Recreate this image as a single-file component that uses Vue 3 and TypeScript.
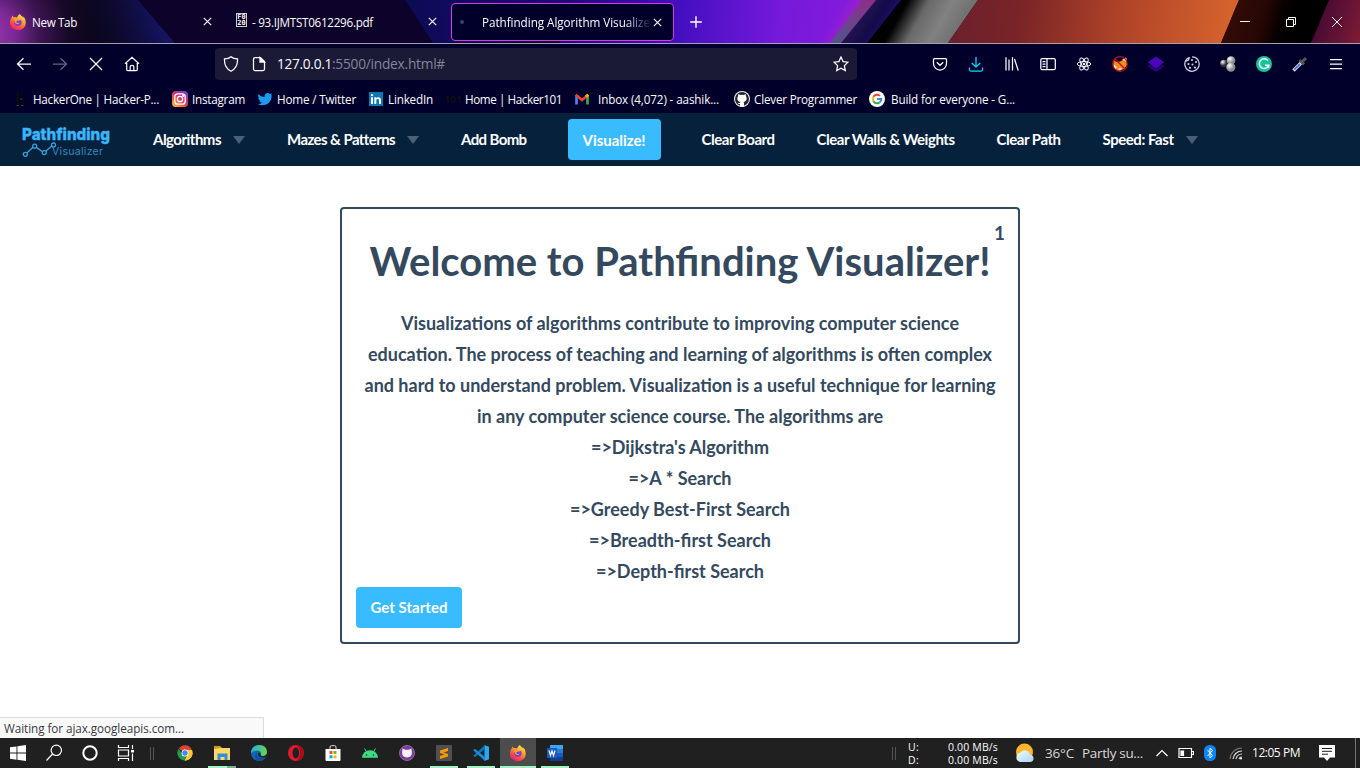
<script setup lang="ts">
import { nextTick, type Directive } from 'vue'

interface Mark { id: string; text: string; width: number }
interface NavItem { text: string; width: number; menu?: boolean; primary?: boolean }

const bookmarks: Mark[] = [
  { id: 'h1', text: 'HackerOne | Hacker-P...', width: 126 },
  { id: 'insta', text: 'Instagram', width: 53 },
  { id: 'twitter', text: 'Home / Twitter', width: 79 },
  { id: 'linkedin', text: 'LinkedIn', width: 45 },
  { id: 'h101', text: 'Home | Hacker101', width: 97 },
  { id: 'gmail', text: 'Inbox (4,072) - aashik...', width: 121 },
  { id: 'github', text: 'Clever Programmer', width: 103 },
  { id: 'google', text: 'Build for everyone - G...', width: 124 },
]

const nav: NavItem[] = [
  { text: 'Algorithms', width: 68, menu: true },
  { text: 'Mazes & Patterns', width: 108, menu: true },
  { text: 'Add Bomb', width: 65.5 },
  { text: 'Visualize!', width: 63, primary: true },
  { text: 'Clear Board', width: 73 },
  { text: 'Clear Walls & Weights', width: 138 },
  { text: 'Clear Path', width: 64 },
  { text: 'Speed: Fast', width: 71, menu: true },
]

const lines = [
  { text: 'Visualizations of algorithms contribute to improving computer science', width: 558 },
  { text: 'education. The process of teaching and learning of algorithms is often complex', width: 624 },
  { text: 'and hard to understand problem. Visualization is a useful technique for learning', width: 631 },
  { text: 'in any computer science course. The algorithms are', width: 406 },
  { text: "=>Dijkstra's Algorithm", width: 178 },
  { text: '=>A * Search', width: 103 },
  { text: '=>Greedy Best-First Search', width: 220 },
  { text: '=>Breadth-first Search', width: 182 },
  { text: '=>Depth-first Search', width: 168 },
]

const spokes = [0, 60, 120]

/* Tracks a label so that it spans the given width. */
const vFit: Directive<HTMLElement, number> = {
  mounted(el, { value }) {
    nextTick(() => {
      const count = (el.textContent ?? '').length
      for (let pass = 0; pass < 2; pass++) {
        const current = parseFloat(el.style.letterSpacing || '0')
        const gap = value - el.getBoundingClientRect().width
        el.style.letterSpacing = `${current + gap / count}px`
      }
    })
  },
}
</script>

<template>
  <div class="screen">
    <header class="tabs">
      <svg class="theme" viewBox="0 0 1360 43" preserveAspectRatio="none">
        <defs>
          <radialGradient id="pu" gradientUnits="userSpaceOnUse" cx="-14" cy="34" r="110">
            <stop offset="0" stop-color="#a336b4" /><stop offset=".25" stop-color="#7c2a96" /><stop offset=".5" stop-color="#3a1450" /><stop offset=".75" stop-color="#180828" /><stop offset="1" stop-color="#0a0416" />
          </radialGradient>
          <linearGradient id="navy" gradientUnits="userSpaceOnUse" x1="70" y1="43" x2="157" y2="14"><stop offset="0" stop-color="#0b0720" stop-opacity="0" /><stop offset="1" stop-color="#141461" /></linearGradient>
          <linearGradient id="vio" gradientUnits="userSpaceOnUse" x1="405" y1="0" x2="860" y2="30"><stop offset="0" stop-color="#0b0b52" /><stop offset=".35" stop-color="#1c0b78" /><stop offset=".6" stop-color="#430fc0" /><stop offset=".82" stop-color="#7519da" /><stop offset="1" stop-color="#861bdd" /></linearGradient>
          <linearGradient id="pink" gradientUnits="userSpaceOnUse" x1="833" y1="20" x2="860" y2="36"><stop offset="0" stop-color="#9b20cc" stop-opacity="0" /><stop offset=".5" stop-color="#9b20cc" /><stop offset="1" stop-color="#9c24b4" /></linearGradient>
          <linearGradient id="mauve" gradientUnits="userSpaceOnUse" x1="868" y1="0" x2="838" y2="43"><stop offset="0" stop-color="#8c2f8c" /><stop offset="1" stop-color="#53538c" /></linearGradient>
          <linearGradient id="ink" gradientUnits="userSpaceOnUse" x1="855" y1="20" x2="884" y2="40"><stop offset="0" stop-color="#251452" /><stop offset=".5" stop-color="#140b4a" /><stop offset="1" stop-color="#2a0c84" /></linearGradient>
          <linearGradient id="grey" gradientUnits="userSpaceOnUse" x1="884" y1="14" x2="962" y2="58"><stop offset="0" stop-color="#000" /><stop offset=".16" stop-color="#020202" /><stop offset=".37" stop-color="#696969" /><stop offset=".6" stop-color="#818181" /><stop offset=".82" stop-color="#707070" /><stop offset="1" stop-color="#949494" /></linearGradient>
          <linearGradient id="fire" gradientUnits="userSpaceOnUse" x1="950" y1="10" x2="1225" y2="43"><stop offset="0" stop-color="#6c202d" /><stop offset=".25" stop-color="#792427" /><stop offset=".6" stop-color="#ae4228" /><stop offset="1" stop-color="#d4622d" /></linearGradient>
          <linearGradient id="coal" gradientUnits="userSpaceOnUse" x1="1221" y1="20" x2="1290" y2="38"><stop offset="0" stop-color="#360c07" /><stop offset=".55" stop-color="#270704" /><stop offset=".8" stop-color="#070101" /><stop offset="1" stop-color="#000" /></linearGradient>
          <linearGradient id="wine" gradientUnits="userSpaceOnUse" x1="1315" y1="20" x2="1360" y2="35"><stop offset="0" stop-color="#430a33" /><stop offset="1" stop-color="#7d1a35" /></linearGradient>
        </defs>
        <rect width="1360" height="43" fill="#0a0416" />
        <rect width="180" height="43" fill="url(#pu)" />
        <path d="M60 0H138L175 43H60Z" fill="url(#navy)" />
        <path d="M138 0H405L433 43H175Z" fill="#0d032a" />
        <path d="M405 0H872L835 43H433Z" fill="url(#vio)" />
        <path d="M440 43L560 41V43Z" fill="#09042b" />
        <path d="M848 0H880L842 43H815Z" fill="url(#pink)" />
        <path d="M862 0H877L842 43H830Z" fill="url(#mauve)" />
        <path d="M876 0H902L868 43H841Z" fill="url(#ink)" />
        <path d="M901 0H978L948 43H867Z" fill="url(#grey)" />
        <path d="M978 0H1239L1221 43H948Z" fill="url(#fire)" />
        <path d="M1239 0H1329L1311 43H1221Z" fill="url(#coal)" />
        <path d="M1329 0H1360V43H1311Z" fill="url(#wine)" />
      </svg>
      <div class="tab first">
        <svg class="i16" viewBox="0 0 16 16"><use href="#firefox" /></svg>
        <span v-fit="45" class="t">New Tab</span>
        <svg class="x" viewBox="0 0 9 9"><path d="M.8.8l7.4 7.4M8.2.8L.8 8.2" /></svg>
      </div>
      <div class="tab second">
        <span class="tofu"><i>F0</i><i>20</i></span>
        <span v-fit="121" class="t">- 93.IJMTST0612296.pdf</span>
        <svg class="x" viewBox="0 0 9 9"><path d="M.8.8l7.4 7.4M8.2.8L.8 8.2" /></svg>
      </div>
      <div class="tab active">
        <i class="dot"></i>
        <span class="clip"><span v-fit="168" class="t">Pathfinding Algorithm Visualize</span></span>
        <svg class="x" viewBox="0 0 9 9"><path d="M.8.8l7.4 7.4M8.2.8L.8 8.2" /></svg>
      </div>
      <svg class="plus" viewBox="0 0 12 12"><path d="M6 .2v11.600M.2 6h11.600" /></svg>
      <div class="win">
        <svg viewBox="0 0 10 10"><path d="M0 4.500h10" /></svg>
        <svg viewBox="0 0 10 10"><path d="M.5 2.500h7v7h-7zM2.500 2.500v-2h7v7h-2" /></svg>
        <svg viewBox="0 0 10 10"><path d="M0 0l10 10M10 0L0 10" /></svg>
      </div>
    </header>

    <div class="toolbar">
      <div class="moves">
        <svg viewBox="0 0 16 16"><path d="M15 8H1.500M7.500 2.200L1.500 8l6 5.800" /></svg>
        <svg class="off" viewBox="0 0 16 16"><path d="M1 8h13.500M8.500 2.200L14.500 8l-6 5.800" /></svg>
        <svg viewBox="0 0 16 16"><path d="M2 2l12 12M14 2L2 14" /></svg>
        <svg viewBox="0 0 16 16"><path d="M1 7.800L8 1.300l7 6.500M2.700 7v6.600q0 1.100 1.100 1.100h8.400q1.100 0 1.100-1.100V7M6.200 14.500v-4q0-1.200 1.800-1.200t1.800 1.200v4" /></svg>
      </div>
      <div class="url">
        <svg viewBox="0 0 16 16"><path d="M8 .8C6.500 2.200 3.700 2.900 1.500 2.900 1.200 8.500 3 12.700 8 15.200 13 12.700 14.800 8.500 14.500 2.900 12.300 2.900 9.500 2.200 8 .8Z" /></svg>
        <svg viewBox="0 0 16 16"><path d="M9.500 1.500H4Q2.500 1.500 2.500 3v10Q2.500 14.500 4 14.500h8q1.500 0 1.500-1.500V5.500Z" /><path d="M9 1.500v4.500h4.500Z" fill="#fbfbfe" /></svg>
        <span class="address"><span v-fit="55">127.0.0.1</span><span v-fit="113" class="dim">:5500/index.html#</span></span>
        <svg class="star" viewBox="0 0 16 16"><path d="M8 1l2.100 4.600 4.900.6-3.600 3.400.9 5L8 12.200 3.700 14.600l.9-5L1 6.200l4.900-.6Z" /></svg>
      </div>
      <div class="tools">
        <svg viewBox="0 0 16 16"><path d="M2.500 2.500h11q1 0 1 1v4a6.500 6.500 0 0 1-13 0v-4q0-1 1-1ZM4.800 6.300L8 9.300l3.200-3" /></svg>
        <svg class="cyan" viewBox="0 0 16 16"><path d="M8 .8v10M3.700 7L8 11l4.300-4M1.500 11.500v2q0 1.500 1.500 1.500h10q1.500 0 1.500-1.500v-2" /></svg>
        <svg viewBox="0 0 16 16"><path d="M2 1.200v13.300M5 3.500v11M8.500 1.200v13.300M10.500 3l3.700 11.500" /></svg>
        <svg viewBox="0 0 16 16"><rect x=".8" y="2.500" width="14.500" height="11.200" rx="1.500" /><path d="M7 2.500v11.200M2.500 5.500h3M2.500 8h3M2.500 10.500h3" /></svg>
        <svg viewBox="0 0 16 16"><ellipse v-for="a in spokes" :key="a" cx="8" cy="8" rx="6.800" ry="2.500" stroke-width="1" :transform="`rotate(${a} 8 8)`" /><circle cx="8" cy="8" r="1.200" fill="#fbfbfe" stroke="none" /></svg>
        <svg viewBox="0 0 16 16"><g stroke="none"><path d="M1.500 4l3 2L8 5.500l3-1.500L14.500 2l.5 7-3 4L6 15l-4.500-4Z" fill="#ef8c20" /><path d="M1 8l4 3-2 2.500ZM10 3.500l4-2 .8 4.500ZM6 12.500l4-.5-2 3Z" fill="#eee0d0" /></g><circle cx="8" cy="8" r="7.300" stroke="#c00d15" stroke-width="1.200" /><path d="M3 3l10 10" stroke="#c00d15" stroke-width="1.200" /></svg>
        <svg viewBox="0 0 16 16"><g stroke="none"><path d="M0 10.500L8 5l8 5.500-8 5.500Z" fill="#260675" /><path d="M0 6.200L8 .5l8 5.700-8 6Z" fill="#4c05b8" /></g></svg>
        <svg viewBox="0 0 16 16"><path d="M5.500 1.300A7.200 7.200 0 1 0 15.200 7.500M5.500 1.300L4.500 4 1.300 5.500M8 .8q6.500.2 7.200 6.700" stroke="#cfcfdc" /><g fill="#cfcfdc" stroke="none"><circle cx="8" cy="4" r="1.100" /><circle cx="12" cy="6" r="1.100" /><circle cx="4.500" cy="8" r="1.100" /><circle cx="8.500" cy="8.500" r="1" /><circle cx="6" cy="11.800" r="1.100" /><circle cx="11" cy="11.500" r="1.100" /></g></svg>
        <svg viewBox="0 0 16 16"><defs><radialGradient id="b1" cx=".35" cy=".3"><stop stop-color="#fff" /><stop offset="1" stop-color="#303030" /></radialGradient><radialGradient id="b2" cx=".35" cy=".3"><stop stop-color="#fff" /><stop offset="1" stop-color="#8d8d8d" /></radialGradient></defs><g stroke="none"><circle cx="3.800" cy="7.500" r="3.700" fill="url(#b1)" /><circle cx="11" cy="4.500" r="4.300" fill="url(#b2)" /><circle cx="10.800" cy="11.300" r="4.500" fill="url(#b2)" /></g></svg>
        <svg viewBox="0 0 16 16"><circle cx="8" cy="8" r="8" fill="#15c39a" stroke="none" /><path d="M12 4.800A4.800 4.800 0 1 0 12.700 9.200H9M12.700 9.200V12" stroke-width="1.500" /></svg>
        <svg viewBox="0 0 16 16"><path d="M1.500 14.500L9.500 6.500" stroke="#dce0ee" stroke-width="3.200" /><path d="M2.400 13.500L8 8" stroke="#3d63c9" stroke-width="1.700" /><path d="M7.500 4L12 8.500M10 6l4-4" stroke="#55555a" stroke-width="3" /></svg>
        <svg viewBox="0 0 16 16"><path d="M2 3.500h12M2 8h12M2 12.500h12" /></svg>
      </div>
    </div>

    <div class="bookmarks">
      <template v-for="m in bookmarks" :key="m.id">
        <svg class="i16" viewBox="0 0 16 16">
          <g v-if="m.id === 'h1'"><path d="M1.500 1h2.500v14H1.500zM6 7h2.500v8H6z" fill="#0b0b0e" /><path d="M1.500 14.500h2.500M6 14.500h2.500M5 8h2" stroke="#555" stroke-width=".8" /></g>
          <g v-else-if="m.id === 'insta'" fill="none" stroke="#fff" stroke-width="1.300"><defs><linearGradient id="ig" x1=".1" y1="1" x2=".8" y2="0"><stop stop-color="#fdc43f" /><stop offset=".35" stop-color="#f25b36" /><stop offset=".65" stop-color="#cc2b8b" /><stop offset="1" stop-color="#6940cf" /></linearGradient></defs><rect width="16" height="16" rx="4" fill="url(#ig)" stroke="none" /><rect x="2.800" y="2.800" width="10.400" height="10.400" rx="3" /><circle cx="8" cy="8" r="2.700" /><circle cx="11.200" cy="4.800" r=".5" /></g>
          <path v-else-if="m.id === 'twitter'" fill="#1d9bf0" d="M14.600 4.300c.4 6.100-4 10-9 10-1.800 0-3.400-.5-4.700-1.400 1.600.2 3-.3 4.200-1.200-1.300 0-2.400-.9-2.800-2h1.300C2.200 9.300 1.200 8 1.200 6.500l1.300.4C1.200 6 .8 4.300 1.600 2.900c1.500 1.800 3.600 3 6 3.100C7.100 3.800 8.700 2 10.600 2c.8 0 1.600.3 2.200.9l1.800-.7c-.2.700-.6 1.200-1.200 1.600l1.600-.4Z" />
          <g v-else-if="m.id === 'linkedin'"><rect x="0" y="1" width="14" height="14" fill="#0a78b5" /><path d="M2 6.300h2V13H2ZM5.300 6.300h2v1c1-1.700 4.700-1.500 4.700 1.700v4h-2V9.500c0-2-2.700-1.900-2.700 0V13h-2Z" fill="#fff" /><circle cx="3" cy="4.100" r="1.200" fill="#fff" /></g>
          <text v-else-if="m.id === 'h101'" class="h101" x="0" y="11.500" textLength="16">101</text>
          <g v-else-if="m.id === 'gmail'" stroke-width="2.700" fill="none"><path d="M2.500 4v9.500" stroke="#4285f4" /><path d="M13.500 4v9.500" stroke="#34a853" /><path d="M1.700 3.800L8 9l6.300-5.200" stroke="#ea4335" /><path d="M12 5.600l2.200-1.800" stroke="#fbbc04" /></g>
          <g v-else-if="m.id === 'github'"><circle cx="8" cy="8" r="8" fill="#f5f5f5" /><circle cx="8" cy="8" r="7" fill="#25232c" /><path d="M4.300 3l2 1q1.700-.5 3.400 0l2-1 .3 2.200c1.500 2.800.2 5.300-2.500 5.700l.5 1v3.600H6v-2.600c-1 .2-2-.1-2.500-1.200 1 .2 1.500.6 2.500.1l.5-.9C3.800 10.500 2.500 8 4 5.200Z" fill="#fff" /></g>
          <g v-else><circle cx="8" cy="8" r="8" fill="#fff" /><g fill="none" stroke-width="2"><path d="M11 4.900A4.200 4.200 0 0 0 4.400 5.800" stroke="#ea4335" /><path d="M4.400 5.800a4.200 4.200 0 0 0 0 4.400" stroke="#fbbc05" /><path d="M4.400 10.200A4.200 4.200 0 0 0 10.800 11.200" stroke="#34a853" /><path d="M10.800 11.200Q12.200 10 12.200 8H8" stroke="#4285f4" /></g></g>
        </svg>
        <span v-fit="m.width" class="t">{{ m.text }}</span>
      </template>
    </div>

    <nav class="nav">
      <svg class="logo" viewBox="0 0 90 36">
        <text class="l1" x="0" y="18" textLength="88" lengthAdjust="spacingAndGlyphs">Pathfinding</text>
        <text class="l2" x="30" y="32.500" textLength="51">Visualizer</text>
        <g fill="none" stroke="#3aa0dd" stroke-width="1.300" transform="translate(0 3)"><path d="M5 27.800l6-5.500M14.300 22.400l6.300 4.400M24 26l6.300-5.500" /><circle cx="3.300" cy="29.300" r="2" /><circle cx="12.700" cy="21.200" r="2" /><circle cx="22.300" cy="27.600" r="2" /><circle cx="31.500" cy="20" r="2" /></g>
      </svg>
      <div class="links">
        <component :is="n.primary ? 'button' : 'a'" v-for="n in nav" :key="n.text" :class="{ primary: n.primary }">
          <span v-fit="n.width">{{ n.text }}</span><i v-if="n.menu" class="caret"></i>
        </component>
      </div>
    </nav>

    <main class="page">
      <section class="card">
        <span class="count">1</span>
        <h1><span v-fit="621">Welcome to Pathfinding Visualizer!</span></h1>
        <p v-for="l in lines" :key="l.text"><span v-fit="l.width">{{ l.text }}</span></p>
        <button class="primary start"><span v-fit="77">Get Started</span></button>
      </section>
      <div class="status"><span v-fit="180">Waiting for ajax.googleapis.com...</span></div>
    </main>

    <footer class="taskbar">
      <div class="cell"><svg viewBox="0 0 16 16" class="i16"><path d="M0 2.300L6.500 1.400V7.600H0ZM7.400 1.300L16 0V7.600H7.400ZM0 8.500H6.500V14.700L0 13.800ZM7.400 8.500H16V16L7.400 14.800Z" fill="#fff" /></svg></div>
      <div class="cell"><svg viewBox="0 0 18 18" class="i18 line"><circle cx="11.300" cy="6.300" r="5.200" /><path d="M7.600 10L1.500 16.500" /></svg></div>
      <div class="cell"><svg viewBox="0 0 18 18" class="i18 line"><circle cx="9" cy="9" r="6.700" stroke-width="2" /></svg></div>
      <div class="cell"><svg viewBox="0 0 18 18" class="i18 line"><path d="M1.500 1v2.500h10V1M1.500 17v-2.500h10V17M1.500 6h10v6h-10zM15.500 1v4M15.500 9.500V17" /><path d="M14 7.200h3" stroke-width="2.500" /></svg></div>
      <div class="grip"></div>
      <div class="apps">
        <div class="cell"><svg viewBox="0 0 16 16" class="i16"><path d="M8 8L1.700 3.800A7.400 7.400 0 0 1 14.700 4.500Z" fill="#df4335" /><path d="M8 8h7.400A7.400 7.400 0 0 1 7.500 15.400L11 9Z" fill="#fcc934" /><path d="M15 5H8l3 4-3.500 6.400A7.400 7.400 0 0 0 15 5Z" fill="#fcc934" /><path d="M1.700 3.800L5.500 9.800 9.500 11 7.500 15.400A7.400 7.400 0 0 1 1.700 3.800Z" fill="#239a4c" /><circle cx="8" cy="8" r="3.500" fill="#fff" /><circle cx="8" cy="8" r="2.700" fill="#4285f4" /></svg></div>
        <div class="cell run two"><svg viewBox="0 0 18 16" class="i18"><path d="M1 1h6l2 2H1Z" fill="#dca010" /><path d="M1 3h16v12H1Z" fill="#ffd968" /><path d="M1 4V1h6l1 2Z" fill="#d99a0d" /><path d="M4.500 15V8.500h10V15h-3v-3h-4v3Z" fill="#2f90d8" /></svg></div>
        <div class="cell"><svg viewBox="0 0 16 16" class="i16"><defs><linearGradient id="ed" x1="0" y1="0" x2="1" y2=".3"><stop stop-color="#27a9e1" /><stop offset="1" stop-color="#65d450" /></linearGradient></defs><circle cx="8" cy="8" r="8" fill="#1267b8" /><path d="M0 8C0-2.500 16-2.500 16 7c0 4-5 5-6.500 3C12 6 6 3 0 8Z" fill="url(#ed)" /><path d="M6 8c-1 5 4 6.500 8.500 4.200l.4.200Q12 16.400 8 16C3 15 3 9 6 8Z" fill="#0d4f9e" /><path d="M9.500 10c.8 1.600 4 1.800 6.500-.7v2c-2 2-9 2-9-2 0-2 2-2 2.500-.5Z" fill="#202020" /></svg></div>
        <div class="cell"><svg viewBox="0 0 16 16" class="i16"><circle cx="8" cy="8" r="8" fill="#e31b2e" /><path d="M8 0a8 8 0 0 1 0 16q4-3 4-8T8 0Z" fill="#a90d1c" /><ellipse cx="7.800" cy="8" rx="3.300" ry="5.600" fill="#202020" /></svg></div>
        <div class="cell"><svg viewBox="0 0 16 16" class="i16"><path d="M5 5V2q0-1.300 1.500-1.300h3Q11 .7 11 2v3" fill="none" stroke="#ddd" /><path d="M.5 4h15v11q0 1-1 1h-13q-1 0-1-1Z" fill="#fff" /><path d="M4.500 6h3v3h-3z" fill="#f25022" /><path d="M8.500 6h3v3h-3z" fill="#7fba00" /><path d="M4.500 10.300h3v3h-3z" fill="#00a4ef" /><path d="M8.500 10.300h3v3h-3z" fill="#ffb900" /></svg></div>
        <div class="cell"><svg viewBox="0 0 16 16" class="i16"><path d="M0 12.800a8 7.500 0 0 1 16 0Z" fill="#3ddc84" /><path d="M4.500 7L2.500 3.500M11.500 7l2-3.500" stroke="#3ddc84" /><circle cx="4.500" cy="10" r=".8" fill="#202020" /><circle cx="11.500" cy="10" r=".8" fill="#202020" /></svg></div>
        <div class="cell"><svg viewBox="0 0 16 16" class="i16"><circle cx="8" cy="8" r="7.500" fill="#7b3c9d" stroke="#8a6a9c" /><path d="M3.500 3.500l3 1.200h3l3-1.200.4 4.200q0 4.500-4.900 4.700-4.900-.2-4.900-4.700Z" fill="#f7eff9" /></svg></div>
        <div class="cell run"><svg viewBox="0 0 16 16" class="i16"><rect width="16" height="16" rx="1" fill="#505050" /><path d="M12 3v3L7.500 7.500 12 9v2.500L4 14v-3l4.500-1.500L4 8V5.500Z" fill="#ff9800" /></svg></div>
        <div class="cell run"><svg viewBox="0 0 16 16" class="i16"><path d="M11.500 0l4.500 1.800v12.400L11.500 16Z" fill="#29a8f0" /><path d="M12 4L1.800 12.300.2 10.800 12 0Z" fill="#0b78bd" /><path d="M12 12L1.800 3.700.2 5.200 12 16Z" fill="#148fd8" /></svg></div>
        <div class="cell run on"><svg viewBox="0 0 16 16" class="i16"><use href="#firefox" /></svg></div>
        <div class="cell run"><svg viewBox="0 0 16 16" class="i16"><path d="M3 0h13v4H3Z" fill="#41a5ee" /><path d="M3 4h13v4H3Z" fill="#2b7cd3" /><path d="M3 8h13v4H3Z" fill="#185abd" /><path d="M3 12h13v4H3Z" fill="#103f91" /><rect y="3" width="10" height="10" fill="#185abd" /><path d="M2 5.500l1.500 5L5 6l1.500 4.500L8 5.500" fill="none" stroke="#fff" stroke-width="1.200" /></svg></div>
      </div>
      <div class="grip right"></div>
      <div class="net">
        <span v-fit="11">U:</span><span v-fit="50">0.00 MB/s</span>
        <span v-fit="11">D:</span><span v-fit="50">0.00 MB/s</span>
      </div>
      <svg class="weather" viewBox="0 0 20 20"><defs><linearGradient id="cl" x1="0" y1="0" x2="1" y2="1"><stop stop-color="#eefaff" /><stop offset="1" stop-color="#a9d6f2" /></linearGradient></defs><circle cx="9.500" cy="9" r="8.500" fill="#ffb52e" /><path d="M5 19a4.700 4.700 0 0 1 .2-9.200 5.500 5.500 0 0 1 10 2A3.700 3.700 0 0 1 16 19Z" fill="url(#cl)" /></svg>
      <span class="temp"><span v-fit="29">36°C</span><span v-fit="61">Partly su...</span></span>
      <div class="tray">
        <svg viewBox="0 0 16 16" class="i16 line"><path d="M2.500 11L8 5.500l5.500 5.500" /></svg>
        <svg viewBox="0 0 16 16" class="i16 line"><path d="M1 3.500h12.500v9H1zM14 6.500h1.500v3H14" /><path d="M3 6h2.500v4.500H3z" fill="#fff" /></svg>
        <svg viewBox="0 0 12 16" class="bt"><rect width="12" height="16" rx="5.500" fill="#0a84ff" /><path d="M3.500 5l5 5.500L6 13V3l2.500 2.500-5 5.500" fill="none" stroke="#fff" /></svg>
        <svg viewBox="0 0 16 16" class="i16 wifi"><path d="M2 14A12 12 0 0 1 14 3" stroke="#777" /><path d="M5 14a9 9 0 0 1 9-8M8 14a6 6 0 0 1 6-5M11 14a3 3 0 0 1 3-2" stroke="#ddd" /><circle cx="13" cy="13.500" r="1" fill="#fff" stroke="none" /></svg>
      </div>
      <span class="clock"><span v-fit="48">12:05 PM</span></span>
      <svg class="note" viewBox="0 0 16 16"><path d="M0 0h16v12.500h-5L8 16l-3-3.500H0Z" fill="#fff" /><path d="M3 3.500h10M3 6.300h10M3 9.200h6" stroke="#202020" /></svg>
    </footer>

    <svg class="defs" width="0" height="0">
      <defs>
        <linearGradient id="ff" x1=".8" y1="0" x2=".2" y2="1"><stop stop-color="#fff44f" /><stop offset=".35" stop-color="#ffa52e" /><stop offset=".7" stop-color="#ff4a42" /><stop offset="1" stop-color="#e31587" /></linearGradient>
        <g id="firefox"><path d="M10 0c.3 1.500 2.500 2.500 3.500 3.800 0-.7 0-1-.2-1.500C17.500 7 16.500 16 8 16-1 16-1.500 7 1.500 4c.2-1 .8-2 1.500-2.500 0 .8.200 1.300.6 1.700Q5.500 2.500 7 3.400 8 1 10 0Z" fill="url(#ff)" /><path d="M4 7c1.500-.9 3-.8 4.300-.3L11 6c1.500 3 0 6-3.200 6C5 12 3.600 9.500 4 7Z" fill="#7542d4" /><path d="M3.600 3.300Q6 3 7.500 5c1 .5 1.200 1 .2 1.500L6.300 7.400c0 1.500 2 2 3 1.100-.3 2.200-3.700 2-4.600-.2Z" fill="#ff9a35" /></g>
      </defs>
    </svg>
  </div>
</template>

<style>
body { margin: 0; overflow: hidden; }
</style>

<style scoped>
.screen { position: relative; width: 1360px; height: 768px; display: flex; flex-direction: column; overflow: hidden; background: #fff; font: 12px/16px "Open Sans", "Noto Sans", sans-serif; color: #fbfbfe; }
svg { display: block; flex: none; }
span, .links a { white-space: nowrap; }
.i16 { width: 16px; height: 16px; }
.i18 { width: 18px; height: 18px; }
.line { fill: none; stroke: #fff; stroke-width: 1.2; }
.t { font-size: 11.7px; }
.defs { position: absolute; }

.tabs { position: relative; box-sizing: border-box; height: 44px; border-bottom: 1px solid #a59fb0; display: flex; align-items: center; flex: none; }
.theme { position: absolute; inset: 0; width: 1360px; height: 43px; }
.tabs > :not(.theme) { position: relative; }
.tab { box-sizing: border-box; display: flex; align-items: center; height: 38px; }
.tab .x { width: 9px; height: 9px; margin-left: auto; fill: none; stroke: #fbfbfe; stroke-width: 1.1; }
.first { width: 212px; padding-left: 10px; gap: 6px; }
.second { width: 225px; padding-left: 24px; }
.tofu { box-sizing: border-box; width: 11px; height: 14px; margin: 0 5px 3px 0; border: 1px solid #ccc; display: flex; flex-direction: column; align-items: center; }
.tofu i { font: bold 7px/6px "DejaVu Sans Mono", monospace; }
.active { width: 223px; margin-left: 14px; margin-top: 1px; padding: 0 11px 0 8px; border: 1px solid #d93be0; border-radius: 4px; background: #00002b; }
.dot { width: 4px; height: 4px; border-radius: 2px; background: #403c70; }
.clip { margin-left: 18px; width: 168px; overflow: hidden; -webkit-mask-image: linear-gradient(90deg, #000 142px, transparent 170px); mask-image: linear-gradient(90deg, #000 142px, transparent 170px); }
.plus { width: 12px; height: 12px; margin-left: 16px; fill: none; stroke: #fff; stroke-width: 1.4; }
.win { display: flex; gap: 36px; margin-left: auto; margin-right: 18px; }
.win svg { width: 10px; height: 10px; fill: none; stroke: #fff; stroke-width: 1; }

.toolbar { box-sizing: border-box; height: 40px; flex: none; display: flex; align-items: center; background: #00002b; }
.toolbar svg { width: 16px; height: 16px; fill: none; stroke: #fbfbfe; stroke-width: 1.25; }
.moves { display: flex; gap: 20px; width: 199px; padding-left: 16px; }
.moves .off { opacity: .4; }
.url { box-sizing: border-box; width: 642px; height: 32px; padding: 0 8px; border-radius: 4px; background: #1a1a36; display: flex; align-items: center; gap: 12px; }
.address { font-size: 13.7px; margin-left: -2px; display: flex; }
.dim { color: #858598; }
.url .star { margin-left: auto; }
.tools { display: flex; gap: 20px; margin-left: 75px; }
.toolbar .cyan { stroke: #00ddff; }

.bookmarks { height: 29px; flex: none; display: grid; align-items: center; justify-items: start; background: #00002b; padding-left: 15px; grid-template-columns: 18px 139px 20px 65px 20px 92px 19px 57px 20px 109px 24px 136px 20px 115px 22px 130px; }
.h101 { font: 900 9px "Inter", sans-serif; fill: #0d0d16; }

.nav { height: 53px; flex: none; display: flex; align-items: center; background: #05213c; font: 700 15px/20px Lato, sans-serif; }
.logo { width: 90px; height: 36px; margin-left: 22px; overflow: visible; }
.l1 { font: 800 16.500px Inter, sans-serif; fill: #3bb5fb; stroke: #3bb5fb; stroke-width: .4; }
.l2 { font: 400 10.500px Inter, sans-serif; fill: #3689bd; }
.links { display: flex; align-items: center; margin-left: 41px; }
.links a { display: flex; align-items: center; margin-right: 42px; padding-bottom: 2px; color: #fff; }
.links span, .card span { font-feature-settings: "liga" 1; }
.caret { margin-left: 12px; margin-top: 3px; border: 6px solid transparent; border-top: 8px solid #4c6073; border-bottom: 0; }
.primary { box-sizing: border-box; height: 41px; padding: 0; border: 0; border-radius: 4px; background: #39bbff; color: #fff; font: 700 15px/20px Lato, sans-serif; display: flex; align-items: center; justify-content: center; }
.links .primary { width: 93px; margin-right: 41px; margin-left: -1px; padding-top: 1px; }

.page { position: relative; height: 572px; flex: none; }
.card { position: relative; box-sizing: border-box; width: 680px; height: 437px; margin: 41px auto 0; padding-top: 26px; border: 2px solid #34495e; border-radius: 4px; color: #34495e; font: 700 18px/31px Lato, sans-serif; text-align: center; }
.card h1 { margin: 0 0 21px; font-size: 40px; line-height: 52px; font-weight: 700; }
.card h1 span, .card p span { display: inline-block; }
.card p { margin: 0; }
.count { position: absolute; right: 13px; top: 8px; font-size: 19px; }
.start { width: 106px; margin-left: 14px; padding-bottom: 1px; }
.status { position: absolute; left: 0; bottom: 0; box-sizing: border-box; width: 264px; height: 21px; padding: 2px 0 0 4px; border: solid #dcdcdc; border-width: 1px 1px 0 0; background: #f9f9fa; color: #38383d; font-size: 11.7px; }
.status span { display: inline-block; }

.taskbar { height: 30px; flex: none; display: flex; align-items: center; background: #202020; position: relative; }
.cell { position: relative; width: 36px; height: 30px; display: flex; align-items: center; justify-content: center; }
.apps { display: flex; margin-left: 12px; }
.apps .cell { width: 37px; }
.run::after { content: ""; position: absolute; left: 5px; right: 4px; bottom: 0; height: 2px; background: #a4f0c5; }
.run.two::after { background: linear-gradient(90deg, #a4f0c5 19px, #78b292 19px); }
.apps .on { background: linear-gradient(90deg, transparent 1px, #4d4d4d 1px); }
.apps .on::after { left: 1px; right: 0; }
.grip { width: 2px; height: 13px; margin-left: 6px; border: solid #555; border-width: 0 1px; }
.grip.right { margin-left: 319px; }
.net { display: grid; grid-template-columns: 40px 50px; margin-left: 12px; padding-top: 1px; font-size: 10.500px; line-height: 13px; }
.net span { justify-self: start; }
.weather { width: 20px; height: 20px; margin-left: 17px; }
.temp { display: flex; gap: 8px; width: 109px; margin-left: 10px; font-size: 13.500px; color: #d8d8d8; }
.temp span { flex: none; }
.tray { display: flex; align-items: center; gap: 8px; }
.bt { width: 12px; height: 16px; margin-left: 2px; }
.wifi { fill: none; stroke-width: 1.2; margin-left: 4px; }
.clock { margin-left: 8px; font-size: 12px; }
.note { width: 16px; height: 16px; margin-left: 19px; }
.taskbar::after { content: ""; position: absolute; right: 4px; top: 0; width: 1px; height: 30px; background: #777; }
</style>
